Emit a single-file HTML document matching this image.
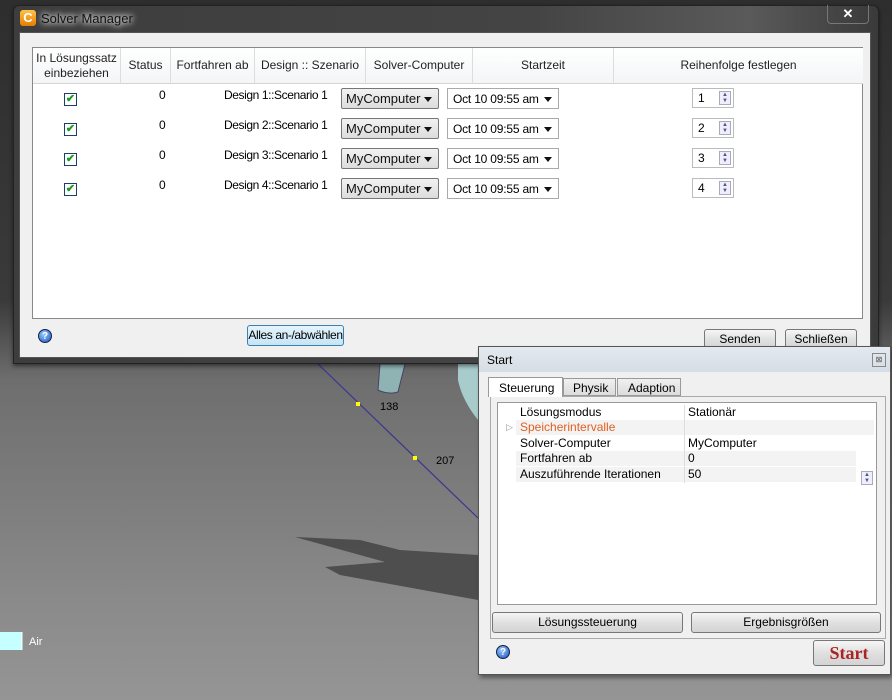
<!DOCTYPE html>
<html><head><meta charset="utf-8"><style>
*{margin:0;padding:0;box-sizing:border-box}
body{width:892px;height:700px;overflow:hidden;position:relative;font-family:"Liberation Sans",sans-serif;font-size:12px;color:#000;white-space:nowrap;
background:linear-gradient(#2e2e2e 0px,#3a3a3a 300px,#6e6e6e 380px,#8a8a8a 600px,#959595 700px)}
.a{position:absolute}
.win{position:absolute;left:13px;top:5px;width:866px;height:359px;background:linear-gradient(90deg,#3d3d3d,#444 60%,#5a5a5a 85%,#3a3a3a);border:1px solid #222;border-radius:6px 6px 0 0;box-shadow:0 2px 4px rgba(0,0,0,.5)}
.client{position:absolute;left:19px;top:32px;width:852px;height:326px;background:#f0f0f0;border:1px solid #555}
.tbl{position:absolute;left:32px;top:47px;width:831px;height:272px;background:#fff;border:1px solid #888}
.hd{position:absolute;top:0;height:36px;border-right:1px solid #ddd;border-bottom:1px solid #d5d5d5;background:linear-gradient(#fff,#f3f5f7);text-align:center;font-size:12px;color:#222;display:flex;align-items:center;justify-content:center;line-height:15px}
.cb{position:absolute;width:13px;height:13px;border:1px solid #1c3e6a;background:#fff;color:#1a9a1a;font-size:11px;line-height:11px;text-align:center;font-weight:bold}
.dd{position:absolute;height:21px;border:1px solid #777;border-radius:2px;background:linear-gradient(#f2f2f2,#dcdcdc);font-size:13px;padding:2px 4px;color:#111}
.dd2{position:absolute;height:21px;border:1px solid #aaa;background:#fff;font-size:12px;padding:3px 5px;letter-spacing:-0.2px}
.tri{position:absolute;right:6px;top:8px;width:0;height:0;border-left:4px solid transparent;border-right:4px solid transparent;border-top:5px solid #111}
.spin{position:absolute;width:42px;height:20px;border:1px solid #bbb;background:#fff;font-size:12px;padding:2px 5px}
.spin i{position:absolute;right:2px;top:2px;width:12px;height:14px;border:1px solid #aab;background:#eef;font-style:normal;font-size:6px;line-height:6px;color:#557;text-align:center}
.btn{position:absolute;height:21px;border:1px solid #777;border-radius:3px;background:linear-gradient(#f6f6f6,#e0e0e0 50%,#d4d4d4);font-size:12px;text-align:center;line-height:19px}
.help{position:absolute;width:14px;height:14px;border-radius:50%;background:radial-gradient(circle at 40% 35%,#9cf,#1a4fc0);color:#fff;font-size:10px;font-weight:bold;text-align:center;line-height:14px;border:1px solid #124}
.start{position:absolute;left:478px;top:346px;width:413px;height:329px;background:#f0f0f0;border:1px solid #555;box-shadow:2px 3px 4px rgba(0,0,0,.4)}
.pr{position:absolute;left:0;height:15px;font-size:12px;line-height:15px}
</style></head><body>
<svg class="a" style="left:0;top:0" width="892" height="700">
<path d="M380 364 L405 364 L398 392 Q388 395 378 390 Z" fill="#8fb3b3" stroke="#446" stroke-width="1"/>
<path d="M458 364 L478 364 L478 420 Q462 400 458 380 Z" fill="#a8cccc"/>
<line x1="318" y1="364" x2="478" y2="518" stroke="#3c3690" stroke-width="1.2"/>
<rect x="356" y="402" width="4" height="4" fill="#ff0"/>
<rect x="413" y="456" width="4" height="4" fill="#ff0"/>
<text x="380" y="410" font-size="11" font-family="Liberation Sans">138</text>
<text x="436" y="464" font-size="11" font-family="Liberation Sans">207</text>
<path d="M295 537 L360 540 L400 550 L478 555 L478 600 L340 575 L325 567 L385 562 Z" fill="#444" opacity=".85"/>
<rect x="0" y="632" width="22" height="18" fill="#c6ffff"/>
<line x1="22" y1="632" x2="22" y2="650" stroke="#fff"/>
<text x="29" y="645" font-size="11" fill="#fff" font-family="Liberation Sans">Air</text>
</svg>
<div class="win"></div>
<div class="a" style="left:20px;top:10px;width:16px;height:16px;border-radius:3px;background:linear-gradient(#ffc24a,#e57d00);color:#fff;font-weight:bold;font-size:13px;text-align:center;line-height:16px">C</div>
<div class="a" style="left:41px;top:11px;font-size:13px;color:#111;text-shadow:0 0 6px #fff,0 0 8px #fff">Solver Manager</div>
<div class="a" style="left:827px;top:5px;width:42px;height:19px;border:1px solid #777;border-top:none;border-radius:0 0 4px 4px;color:#fff;text-align:center;font-size:13px;font-weight:bold;line-height:18px">✕</div>
<div class="client"></div>
<div class="tbl">
<div class="hd" style="left:0;width:88px">In Lösungssatz<br>einbeziehen</div>
<div class="hd" style="left:88px;width:50px">Status</div>
<div class="hd" style="left:138px;width:84px">Fortfahren ab</div>
<div class="hd" style="left:222px;width:111px">Design :: Szenario</div>
<div class="hd" style="left:333px;width:107px">Solver-Computer</div>
<div class="hd" style="left:440px;width:141px">Startzeit</div>
<div class="hd" style="left:581px;width:249px;border-right:none">Reihenfolge festlegen</div>
</div>
<div class="cb" style="left:64px;top:93px">✔</div>
<div class="cb" style="left:64px;top:123px">✔</div>
<div class="cb" style="left:64px;top:153px">✔</div>
<div class="cb" style="left:64px;top:183px">✔</div>
<div class="a" style="left:159px;top:80px;line-height:30px">0<br>0<br>0<br>0</div>
<div class="a" style="left:224px;top:80px;line-height:30px;letter-spacing:-0.4px">Design 1::Scenario 1<br>Design 2::Scenario 1<br>Design 3::Scenario 1<br>Design 4::Scenario 1</div>
<div class="dd" style="left:341px;top:88px;width:98px">MyComputer<span class="tri"></span></div>
<div class="dd" style="left:341px;top:118px;width:98px">MyComputer<span class="tri"></span></div>
<div class="dd" style="left:341px;top:148px;width:98px">MyComputer<span class="tri"></span></div>
<div class="dd" style="left:341px;top:178px;width:98px">MyComputer<span class="tri"></span></div>
<div class="dd2" style="left:447px;top:88px;width:112px">Oct 10 09:55 am<span class="tri"></span></div>
<div class="dd2" style="left:447px;top:118px;width:112px">Oct 10 09:55 am<span class="tri"></span></div>
<div class="dd2" style="left:447px;top:148px;width:112px">Oct 10 09:55 am<span class="tri"></span></div>
<div class="dd2" style="left:447px;top:178px;width:112px">Oct 10 09:55 am<span class="tri"></span></div>
<div class="spin" style="left:692px;top:88px">1<i>▲<br>▼</i></div>
<div class="spin" style="left:692px;top:118px">2<i>▲<br>▼</i></div>
<div class="spin" style="left:692px;top:148px">3<i>▲<br>▼</i></div>
<div class="spin" style="left:692px;top:178px">4<i>▲<br>▼</i></div>
<div class="help" style="left:38px;top:329px">?</div>
<div class="btn" style="left:247px;top:325px;width:97px;border-color:#3c7fb1;background:linear-gradient(#e5f4fc,#c4e5f6);letter-spacing:-0.4px">Alles an-/abwählen</div>
<div class="btn" style="left:704px;top:329px;width:72px">Senden</div>
<div class="btn" style="left:785px;top:329px;width:72px">Schließen</div>
<div class="start">
<div class="a" style="left:0;top:0;width:411px;height:25px;background:linear-gradient(#e4e9ef,#d6dde6);font-size:12px;padding:6px 8px">Start</div>
<div class="a" style="left:393px;top:6px;width:14px;height:14px;border:1px solid #888;font-size:8px;text-align:center;line-height:12px;color:#555">⊠</div>
<div class="a" style="left:11px;top:49px;width:396px;height:243px;border:1px solid #aaa"></div>
<div class="a" style="left:9px;top:30px;width:75px;height:20px;background:#fff;border:1px solid #999;border-bottom:none;padding:3px 10px">Steuerung</div>
<div class="a" style="left:84px;top:31px;width:53px;height:18px;background:linear-gradient(#f0f0f0,#dcdcdc);border:1px solid #999;padding:2px 9px">Physik</div>
<div class="a" style="left:138px;top:31px;width:64px;height:18px;background:linear-gradient(#f0f0f0,#dcdcdc);border:1px solid #999;padding:2px 10px">Adaption</div>
<div class="a" style="left:18px;top:55px;width:380px;height:203px;background:#fff;border:1px solid #999">
<div class="pr" style="top:2px;left:22px">Lösungsmodus</div><div class="pr" style="top:2px;left:190px">Stationär</div>
<div class="pr" style="top:17px;left:18px;width:358px;background:#f3f3f3"></div>
<div class="pr" style="top:17px;left:8px;color:#999;font-size:9px">▷</div>
<div class="pr" style="top:17px;left:22px;color:#e06020">Speicherintervalle</div>
<div class="pr" style="top:33px;left:22px">Solver-Computer</div><div class="pr" style="top:33px;left:190px">MyComputer</div>
<div class="pr" style="top:48px;left:18px;width:340px;background:#f3f3f3"></div>
<div class="pr" style="top:48px;left:22px">Fortfahren ab</div><div class="pr" style="top:48px;left:190px">0</div>
<div class="pr" style="top:64px;left:18px;width:340px;background:#f3f3f3"></div>
<div class="pr" style="top:64px;left:22px">Auszuführende Iterationen</div><div class="pr" style="top:64px;left:190px">50</div>
<div class="a" style="left:186px;top:2px;width:1px;height:78px;background:#ddd"></div>
<div class="a" style="left:363px;top:68px;width:12px;height:14px;border:1px solid #aab;background:#eef;font-size:6px;line-height:6px;color:#557;text-align:center">▲<br>▼</div>
</div>
<div class="btn" style="left:13px;top:265px;width:191px">Lösungssteuerung</div>
<div class="btn" style="left:212px;top:265px;width:190px">Ergebnisgrößen</div>
<div class="help" style="left:17px;top:298px">?</div>
<div class="btn" style="left:334px;top:293px;width:72px;height:26px;font-family:'Liberation Serif',serif;font-weight:bold;font-size:18px;line-height:24px;color:#a22">Start</div>
</div>
</body></html>
